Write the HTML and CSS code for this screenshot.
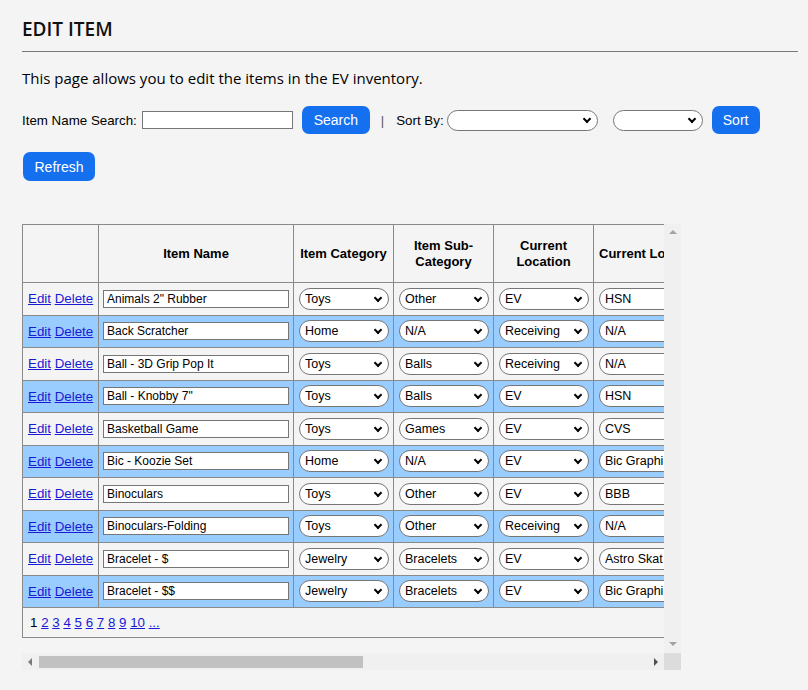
FILE: index.html
```html
<!DOCTYPE html>
<html lang="en">
<head>
<meta charset="utf-8">
<title>Edit Item</title>
<link rel="stylesheet" href="styles.css">
</head>
<body>
<div class="page">
  <h1 class="title">EDIT ITEM</h1>
  <p class="intro">This page allows you to edit the items in the EV inventory.</p>

  <div class="toolbar">
    <label class="lbl" for="q">Item Name Search:</label>
    <input class="search-input" id="q" type="text">
    <button class="btn btn-search" type="button">Search</button>
    <span class="sep">|</span>
    <span class="lbl sort-lbl">Sort By:</span>
    <span class="sel sel-sort"><select><option></option></select></span>
    <span class="sel sel-dir"><select><option></option></select></span>
    <button class="btn btn-sort" type="button">Sort</button>
  </div>

  <div class="toolbar2">
    <button class="btn btn-refresh" type="button">Refresh</button>
  </div>

  <div class="scroller">
    <div class="viewport">
      <table class="grid">
        <colgroup>
          <col class="c-act"><col class="c-name"><col class="c-sel"><col class="c-sel"><col class="c-sel"><col class="c-loc">
        </colgroup>
        <thead>
          <tr>
            <th></th>
            <th>Item Name</th>
            <th>Item Category</th>
            <th>Item Sub-Category</th>
            <th>Current Location</th>
            <th class="th-left">Current Lo</th>
          </tr>
        </thead>
        <tbody>
          <tr>
            <td class="act"><a href="#">Edit</a> <a href="#">Delete</a></td>
            <td><input class="name-input" type="text" value='Animals 2" Rubber'></td>
            <td><span class="sel"><select><option>Toys</option></select></span></td>
            <td><span class="sel"><select><option>Other</option></select></span></td>
            <td><span class="sel"><select><option>EV</option></select></span></td>
            <td><span class="sel sel-wide"><select><option>HSN</option></select></span></td>
          </tr>
          <tr class="alt">
            <td class="act"><a href="#">Edit</a> <a href="#">Delete</a></td>
            <td><input class="name-input" type="text" value="Back Scratcher"></td>
            <td><span class="sel"><select><option>Home</option></select></span></td>
            <td><span class="sel"><select><option>N/A</option></select></span></td>
            <td><span class="sel"><select><option>Receiving</option></select></span></td>
            <td><span class="sel sel-wide"><select><option>N/A</option></select></span></td>
          </tr>
          <tr>
            <td class="act"><a href="#">Edit</a> <a href="#">Delete</a></td>
            <td><input class="name-input" type="text" value="Ball - 3D Grip Pop It"></td>
            <td><span class="sel"><select><option>Toys</option></select></span></td>
            <td><span class="sel"><select><option>Balls</option></select></span></td>
            <td><span class="sel"><select><option>Receiving</option></select></span></td>
            <td><span class="sel sel-wide"><select><option>N/A</option></select></span></td>
          </tr>
          <tr class="alt">
            <td class="act"><a href="#">Edit</a> <a href="#">Delete</a></td>
            <td><input class="name-input" type="text" value='Ball - Knobby 7"'></td>
            <td><span class="sel"><select><option>Toys</option></select></span></td>
            <td><span class="sel"><select><option>Balls</option></select></span></td>
            <td><span class="sel"><select><option>EV</option></select></span></td>
            <td><span class="sel sel-wide"><select><option>HSN</option></select></span></td>
          </tr>
          <tr>
            <td class="act"><a href="#">Edit</a> <a href="#">Delete</a></td>
            <td><input class="name-input" type="text" value="Basketball Game"></td>
            <td><span class="sel"><select><option>Toys</option></select></span></td>
            <td><span class="sel"><select><option>Games</option></select></span></td>
            <td><span class="sel"><select><option>EV</option></select></span></td>
            <td><span class="sel sel-wide"><select><option>CVS</option></select></span></td>
          </tr>
          <tr class="alt">
            <td class="act"><a href="#">Edit</a> <a href="#">Delete</a></td>
            <td><input class="name-input" type="text" value="Bic - Koozie Set"></td>
            <td><span class="sel"><select><option>Home</option></select></span></td>
            <td><span class="sel"><select><option>N/A</option></select></span></td>
            <td><span class="sel"><select><option>EV</option></select></span></td>
            <td><span class="sel sel-wide"><select><option>Bic Graphi</option></select></span></td>
          </tr>
          <tr>
            <td class="act"><a href="#">Edit</a> <a href="#">Delete</a></td>
            <td><input class="name-input" type="text" value="Binoculars"></td>
            <td><span class="sel"><select><option>Toys</option></select></span></td>
            <td><span class="sel"><select><option>Other</option></select></span></td>
            <td><span class="sel"><select><option>EV</option></select></span></td>
            <td><span class="sel sel-wide"><select><option>BBB</option></select></span></td>
          </tr>
          <tr class="alt">
            <td class="act"><a href="#">Edit</a> <a href="#">Delete</a></td>
            <td><input class="name-input" type="text" value="Binoculars-Folding"></td>
            <td><span class="sel"><select><option>Toys</option></select></span></td>
            <td><span class="sel"><select><option>Other</option></select></span></td>
            <td><span class="sel"><select><option>Receiving</option></select></span></td>
            <td><span class="sel sel-wide"><select><option>N/A</option></select></span></td>
          </tr>
          <tr>
            <td class="act"><a href="#">Edit</a> <a href="#">Delete</a></td>
            <td><input class="name-input" type="text" value="Bracelet - $"></td>
            <td><span class="sel"><select><option>Jewelry</option></select></span></td>
            <td><span class="sel"><select><option>Bracelets</option></select></span></td>
            <td><span class="sel"><select><option>EV</option></select></span></td>
            <td><span class="sel sel-wide"><select><option>Astro Skat</option></select></span></td>
          </tr>
          <tr class="alt">
            <td class="act"><a href="#">Edit</a> <a href="#">Delete</a></td>
            <td><input class="name-input" type="text" value="Bracelet - $$"></td>
            <td><span class="sel"><select><option>Jewelry</option></select></span></td>
            <td><span class="sel"><select><option>Bracelets</option></select></span></td>
            <td><span class="sel"><select><option>EV</option></select></span></td>
            <td><span class="sel sel-wide"><select><option>Bic Graphi</option></select></span></td>
          </tr>
        </tbody>
        <tfoot>
          <tr class="pager-row">
            <td colspan="6" class="pager">
              <span>1</span> <a href="#">2</a> <a href="#">3</a> <a href="#">4</a> <a href="#">5</a> <a href="#">6</a> <a href="#">7</a> <a href="#">8</a> <a href="#">9</a> <a href="#">10</a> <a href="#">...</a>
            </td>
          </tr>
        </tfoot>
      </table>
    </div>
    <div class="vbar">
      <span class="arrow arrow-up"></span>
      <span class="vtrack"></span>
      <span class="arrow arrow-down"></span>
    </div>
    <div class="hbar">
      <span class="arrow arrow-left"></span>
      <span class="htrack"><span class="hthumb"></span></span>
      <span class="arrow arrow-right"></span>
    </div>
    <div class="corner"></div>
  </div>
</div>
</body>
</html>
```

FILE: styles.css
```css
html, body {
  margin: 0;
  padding: 0;
  background: #f4f4f4;
}

body {
  font-family: "Liberation Sans", Arial, sans-serif;
  color: #000;
}

.page {
  padding: 17px 10px 0 22px;
}

.title {
  margin: 0;
  font-family: "Open Sans", "Noto Sans", sans-serif;
  font-weight: 600;
  font-size: 19px;
  line-height: 24px;
  padding-bottom: 10px;
  border-bottom: 1px solid #7a7a7a;
  color: #111;
}

.intro {
  margin: 16px 0 0;
  font-family: "Open Sans", "Noto Sans", sans-serif;
  font-weight: 500;
  font-size: 15px;
  line-height: 20px;
  color: #000;
}

.toolbar {
  margin-top: 18px;
  height: 28px;
  display: flex;
  align-items: center;
}

.lbl {
  font-size: 13.33px;
}

.search-input {
  margin: 0 0 0 5px;
  width: 151px;
  height: 18px;
  box-sizing: border-box;
  border: 1px solid #767676;
  background: #fff;
  padding: 0 2px;
}

.btn {
  font-family: "Liberation Sans", Arial, sans-serif;
  font-size: 14px;
  color: #fff;
  background: #1570f0;
  border: 0;
  border-radius: 7px;
  height: 28px;
  padding: 0;
  cursor: pointer;
}

.btn-search {
  margin-left: 9px;
  width: 68px;
}

.sep {
  margin-left: 11px;
  font-size: 13px;
  color: #555;
}

.sort-lbl {
  margin-left: 12px;
}

.sel {
  position: relative;
  display: inline-block;
  vertical-align: middle;
}

.sel select {
  appearance: none;
  -webkit-appearance: none;
  display: block;
  box-sizing: border-box;
  width: 90px;
  height: 22px;
  margin: 0;
  padding: 0 18px 0 5px;
  border: 1px solid #767676;
  border-radius: 11px;
  background: #fff;
  font-family: "Liberation Sans", Arial, sans-serif;
  font-size: 12.5px;
  color: #000;
}

.sel::after {
  content: "";
  position: absolute;
  right: 8px;
  top: 50%;
  width: 4px;
  height: 4px;
  margin-top: -4px;
  border: solid #000;
  border-width: 0 2.5px 2.5px 0;
  transform: rotate(45deg);
  pointer-events: none;
}

.sel-sort {
  margin-left: 3px;
}

.sel-sort select {
  width: 151px;
  height: 21px;
}

.sel-dir {
  margin-left: 15px;
}

.sel-dir select {
  width: 90px;
  height: 21px;
}

.btn-sort {
  margin-left: 9px;
  width: 48px;
}

.toolbar2 {
  margin-top: 18px;
}

.btn-refresh {
  display: block;
  margin-left: 1px;
  width: 72px;
  height: 29px;
}

/* scroll container */
.scroller {
  margin-top: 43px;
  width: 659px;
  display: grid;
  grid-template-columns: 642px 17px;
  grid-template-rows: 429px 17px;
}

.viewport {
  overflow: hidden;
}

.grid {
  border-collapse: collapse;
  table-layout: fixed;
  width: 1140px;
  font-size: 13.33px;
}

.c-act { width: 76px; }
.c-name { width: 195px; }
.c-sel { width: 100px; }
.c-loc { width: 569px; }

.grid th,
.grid td {
  border: 1px solid #8a8a8a;
  padding: 0 4px;
  vertical-align: middle;
}

.grid th {
  height: 57px;
  font-weight: bold;
  font-size: 13px;
  line-height: 16px;
  text-align: center;
}

.grid th.th-left {
  text-align: left;
  white-space: nowrap;
  padding-left: 5px;
}

.grid tbody tr {
  height: 32.5px;
}

.grid tbody td .sel {
  margin-left: 1px;
}

.grid tr.alt td {
  background: #99ccff;
}

.grid td.act {
  padding: 0 5px;
  white-space: nowrap;
}

a {
  color: #1a1ad6;
}

.name-input {
  display: block;
  box-sizing: border-box;
  width: 186px;
  height: 18px;
  margin: 0;
  padding: 0 3px;
  border: 1px solid #767676;
  background: #fff;
  font-family: "Liberation Sans", Arial, sans-serif;
  font-size: 12px;
  color: #000;
}

.sel-wide select {
  width: 160px;
}

.pager-row td {
  height: 29px;
  padding-left: 7px;
  font-size: 13.33px;
}

/* scrollbars */
.vbar {
  background: #f0f0f0;
  display: flex;
  flex-direction: column;
  align-items: center;
}

.vtrack {
  flex: 1;
}

.hbar {
  background: #f0f0f0;
  display: flex;
  align-items: center;
}

.htrack {
  flex: 1;
  height: 100%;
  display: flex;
  align-items: center;
}

.hthumb {
  display: block;
  width: 324px;
  height: 12px;
  background: #c1c1c1;
}

.corner {
  background: #dcdcdc;
}

.arrow {
  display: block;
  width: 0;
  height: 0;
  border-style: solid;
  flex: none;
}

.arrow-up {
  margin-top: 6px;
  margin-bottom: 6px;
  border-width: 0 4px 4px 4px;
  border-color: transparent transparent #a3a3a3 transparent;
}

.arrow-down {
  margin-top: 6px;
  margin-bottom: 7px;
  border-width: 4px 4px 0 4px;
  border-color: #a3a3a3 transparent transparent transparent;
}

.arrow-left {
  margin-left: 6px;
  margin-right: 7px;
  border-width: 4px 4px 4px 0;
  border-color: transparent #7a7a7a transparent transparent;
}

.arrow-right {
  margin-left: 6px;
  margin-right: 6px;
  border-width: 4px 0 4px 4px;
  border-color: transparent transparent transparent #505050;
}
```
